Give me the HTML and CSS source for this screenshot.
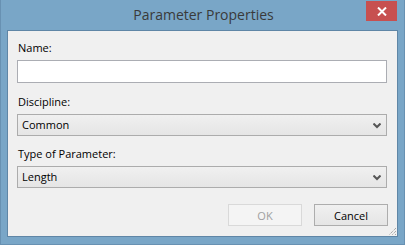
FILE: index.html
```html
<!DOCTYPE html>
<html lang="en">
<head>
    <meta charset="UTF-8">
    <title>Parameter Properties</title>
    <link rel="stylesheet" href="styles.css">
</head>
<body>
    <div class="window">
        <div class="titlebar">
            <span class="title">Parameter Properties</span>
            <button class="close-btn" aria-label="Close">
                <svg width="10" height="9" viewBox="0 0 10 9">
                    <path d="M1 0.5 L9 8.5 M9 0.5 L1 8.5" stroke="#fff" stroke-width="2"/>
                </svg>
            </button>
        </div>

        <div class="client">
            <label class="field-label">Name:</label>
            <input type="text" class="text-input">

            <label class="field-label">Discipline:</label>
            <div class="combo">
                <span>Common</span>
                <svg class="chevron" width="8" height="6" viewBox="0 0 8 6">
                    <path d="M0.5 0.5 L4 4 L7.5 0.5" stroke="#555" stroke-width="2" fill="none"/>
                </svg>
            </div>

            <label class="field-label">Type of Parameter:</label>
            <div class="combo">
                <span>Length</span>
                <svg class="chevron" width="8" height="6" viewBox="0 0 8 6">
                    <path d="M0.5 0.5 L4 4 L7.5 0.5" stroke="#555" stroke-width="2" fill="none"/>
                </svg>
            </div>

            <div class="button-row">
                <button class="btn" disabled>OK</button>
                <button class="btn">Cancel</button>
            </div>

            <!-- resize grip -->
            <svg class="grip" width="10" height="10" viewBox="0 0 10 10">
                <path d="M9 2 L2 9 M9 5 L5 9 M9 8 L8 9" stroke="#8a8a8a" stroke-width="1" stroke-dasharray="1 1"/>
            </svg>
        </div>
    </div>
</body>
</html>
```

FILE: styles.css
```css
html, body {
    margin: 0;
    padding: 0;
}
body {
    width: 405px;
    height: 245px;
    overflow: hidden;
    font-family: "Open Sans", "Liberation Sans", sans-serif;
    font-size: 11px;
    color: #000;
}
.window {
    box-sizing: border-box;
    width: 405px;
    height: 245px;
    background-color: #79a6c7;
    border: 1px solid #6891b2;
    border-top: none;
    padding: 0 6px 7px 6px;
    display: flex;
    flex-direction: column;
}
.titlebar {
    height: 30px;
    flex: none;
    display: flex;
    align-items: center;
    justify-content: center;
    position: relative;
}
.title {
    font-size: 14px;
    color: #3a3a3a;
    margin-top: -1px;
    margin-left: 2px;
}
.close-btn {
    position: absolute;
    right: 1px;
    top: 1px;
    width: 31px;
    height: 20px;
    border: none;
    padding: 0;
    background-color: #c75050;
    display: flex;
    align-items: center;
    justify-content: center;
}
.client {
    flex: 1;
    background-color: #f0f0f0;
    border: 1px solid #5f86a6;
    padding: 9px 10px 0 9px;
    display: flex;
    flex-direction: column;
    position: relative;
}
.field-label {
    display: block;
    line-height: 16px;
    height: 16px;
    padding-left: 1px;
    margin-bottom: 4px;
}
.text-input {
    box-sizing: border-box;
    width: 370px;
    height: 23px;
    margin: 0 0 11px 0;
    border: 1px solid #abadb3;
    background: #fff;
    font: inherit;
}
.combo {
    box-sizing: border-box;
    width: 370px;
    height: 22px;
    border: 1px solid #acacac;
    background: linear-gradient(#f0f0f0, #e5e5e5);
    display: flex;
    align-items: center;
    justify-content: space-between;
    padding: 0 5px 0 4px;
    margin-bottom: 10px;
}
.combo span {
    margin-top: -1px;
}
.chevron {
    margin-top: 1px;
}
.button-row {
    display: flex;
    justify-content: flex-end;
    gap: 12px;
    margin-top: 6px;
    width: 371px;
}
.btn {
    box-sizing: border-box;
    width: 74px;
    height: 22px;
    border: 1px solid #adadad;
    background: linear-gradient(#f0f0f0, #e5e5e5);
    font: inherit;
    color: #000;
    padding: 0;
}
.btn:disabled {
    border-color: #d9d9d9;
    background: #f4f4f4;
    color: #a0a0a0;
}
.grip {
    position: absolute;
    right: 0;
    bottom: 0;
}
```
